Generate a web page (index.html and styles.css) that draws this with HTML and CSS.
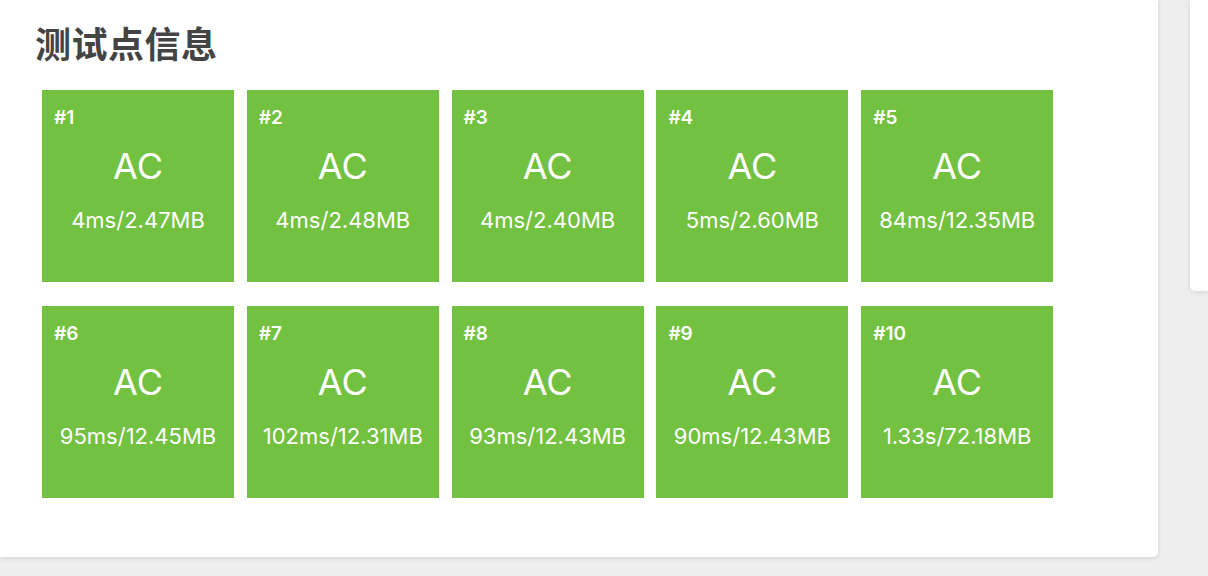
FILE: index.html
```html
<!DOCTYPE html>
<html lang="zh-CN">
<head>
<meta charset="utf-8">
<title>测试点信息</title>
<link rel="stylesheet" href="styles.css">
</head>
<body>
<div class="page">
  <section class="card main">
    <h2 class="title">测试点信息</h2>
    <div class="cases">
      <div class="case"><div class="id">#1</div><div class="status">AC</div><div class="usage">4ms/2.47MB</div></div>
      <div class="case"><div class="id">#2</div><div class="status">AC</div><div class="usage">4ms/2.48MB</div></div>
      <div class="case"><div class="id">#3</div><div class="status">AC</div><div class="usage">4ms/2.40MB</div></div>
      <div class="case"><div class="id">#4</div><div class="status">AC</div><div class="usage">5ms/2.60MB</div></div>
      <div class="case"><div class="id">#5</div><div class="status">AC</div><div class="usage">84ms/12.35MB</div></div>
      <div class="case"><div class="id">#6</div><div class="status">AC</div><div class="usage">95ms/12.45MB</div></div>
      <div class="case"><div class="id">#7</div><div class="status">AC</div><div class="usage">102ms/12.31MB</div></div>
      <div class="case"><div class="id">#8</div><div class="status">AC</div><div class="usage">93ms/12.43MB</div></div>
      <div class="case"><div class="id">#9</div><div class="status">AC</div><div class="usage">90ms/12.43MB</div></div>
      <div class="case"><div class="id">#10</div><div class="status">AC</div><div class="usage">1.33s/72.18MB</div></div>
    </div>
  </section>
  <aside class="card side"></aside>
</div>
</body>
</html>
```
FILE: styles.css
```css
html, body {
  margin: 0;
  padding: 0;
}
body {
  background: #eeeeee;
  font-family: Inter, "Noto Sans", "Liberation Sans", "Noto Sans CJK SC", sans-serif;
  width: 1208px;
  height: 576px;
  overflow: hidden;
}
.page {
  display: flex;
  align-items: flex-start;
  gap: 32px;
}
.card {
  background: #ffffff;
  box-shadow: 0 1px 5px rgba(0, 0, 0, 0.12);
}
.main {
  width: 1158px;
  height: 557px;
  box-sizing: border-box;
  border-radius: 0 0 5px 0;
  padding: 24px 0 0 35px;
  flex: none;
}
.side {
  flex: 1;
  height: 291px;
  border-radius: 0 0 0 5px;
}
.title {
  margin: 0;
  font-family: "Noto Sans CJK SC", sans-serif;
  font-size: 36px;
  line-height: 36px;
  font-weight: 700;
  color: #444444;
  letter-spacing: 0.5px;
}
.cases {
  display: grid;
  grid-template-columns: repeat(5, 192px);
  column-gap: 12.8px;
  row-gap: 24px;
  margin: 30px 0 0 7px;
}
.case {
  width: 192px;
  height: 192px;
  background: #73c141;
  color: #ffffff;
  box-sizing: border-box;
  padding: 17px 12px 0;
}
.id {
  font-size: 19px;
  line-height: 22px;
  font-weight: 600;
}
.status {
  text-align: center;
  font-size: 36px;
  line-height: 44px;
  margin-top: 15px;
}
.usage {
  text-align: center;
  font-size: 22px;
  line-height: 26px;
  margin-top: 19px;
  white-space: nowrap;
}
```
